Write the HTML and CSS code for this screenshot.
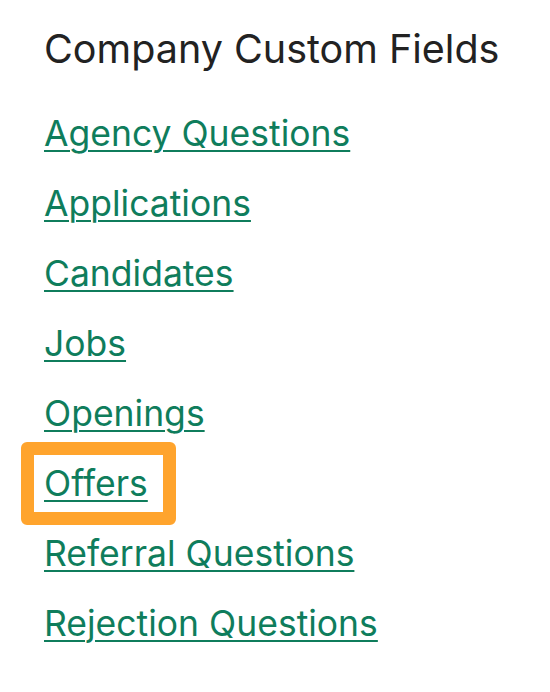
FILE: index.html
```html
<!DOCTYPE html>
<html>
<head>
<meta charset="utf-8">
<link rel="stylesheet" href="styles.css">
</head>
<body>
<main class="panel">
  <h1 class="title">Company Custom Fields</h1>
  <ul class="links">
    <li><a href="#">Agency Questions</a></li>
    <li><a href="#">Applications</a></li>
    <li><a href="#">Candidates</a></li>
    <li><a href="#">Jobs</a></li>
    <li><a href="#">Openings</a></li>
    <li><a href="#" class="highlight">Offers</a></li>
    <li><a href="#">Referral Questions</a></li>
    <li><a href="#">Rejection Questions</a></li>
  </ul>
</main>
</body>
</html>
```

FILE: styles.css
```css
html, body {
  margin: 0;
  padding: 0;
  background: #ffffff;
}
.panel {
  padding: 24px 0 0 44px;
  font-family: Inter, "Liberation Sans", sans-serif;
}
.title {
  margin: 0;
  font-size: 39.5px;
  font-weight: 400;
  line-height: 50px;
  color: #222222;
}
.links {
  list-style: none;
  margin: 25px 0 0 0;
  padding: 0;
}
.links li {
  height: 70px;
  line-height: 70px;
  font-size: 35.5px;
}
.links a {
  color: #0f7d5c;
  text-decoration: underline;
  text-decoration-thickness: 2px;
  text-underline-offset: 4px;
}
.highlight {
  position: relative;
}
.highlight::before {
  content: "";
  position: absolute;
  left: -23px;
  top: -20px;
  right: -28px;
  bottom: -20px;
  border: 13px solid #ffa42d;
  border-radius: 6px;
}
```
